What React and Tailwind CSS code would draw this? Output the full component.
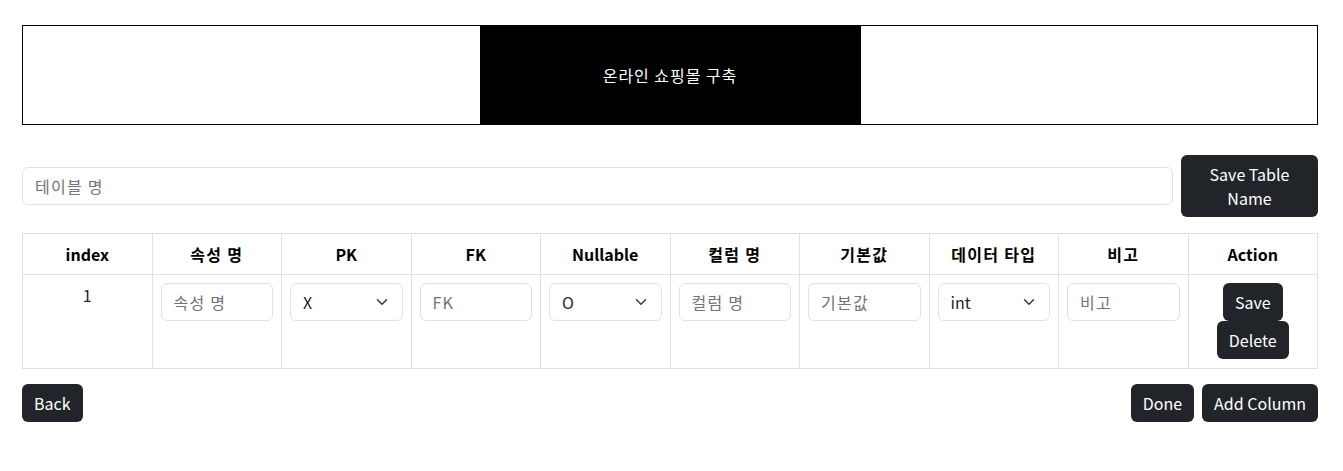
import React from "react";

const font = { fontFamily: '"Segoe UI", "Noto Sans CJK KR", "Noto Sans", sans-serif' };

const Chevron = () => (
  <svg width="16" height="12" viewBox="0 0 16 16" preserveAspectRatio="xMidYMid meet" className="absolute right-[12px] top-1/2 -translate-y-1/2">
    <path d="m2 5 6 6 6-6" fill="none" stroke="#343a40" strokeWidth="2" strokeLinecap="round" strokeLinejoin="round" />
  </svg>
);

const Field = ({ placeholder }) => (
  <input
    placeholder={placeholder}
    className="w-full h-[38px] px-[12px] border border-[#dee2e6] rounded-[6px] text-[16px] text-[#212529] placeholder:text-[#6c757d] placeholder:tracking-[0.08em] bg-white outline-none"
  />
);

const Select = ({ value }) => (
  <div className="relative w-full h-[38px] border border-[#dee2e6] rounded-[6px] bg-white flex items-center px-[12px] text-[16px] text-[#212529]">
    {value}
    <Chevron />
  </div>
);

const Btn = ({ children, className = "" }) => (
  <button className={`bg-[#212529] text-white text-[16px] leading-6 rounded-[6px] px-[12px] py-[7px] ${className}`}>
    {children}
  </button>
);

const headers = [
  { t: "index" },
  { t: "속성 명", ko: true },
  { t: "PK" },
  { t: "FK" },
  { t: "Nullable" },
  { t: "컬럼 명", ko: true },
  { t: "기본값", ko: true },
  { t: "데이터 타입", ko: true },
  { t: "비고", ko: true },
  { t: "Action" },
];

export default function App() {
  return (
    <div className="bg-white min-h-screen pl-[22px] pr-[25px] pt-[25px] text-[#212529] leading-6" style={font}>
      <div className="flex justify-center border border-black h-[100px]">
        <div className="w-[381px] bg-black flex items-center justify-center text-white text-[16px] tracking-[0.06em]">
          온라인 쇼핑몰 구축
        </div>
      </div>

      <div className="flex items-center gap-[8px] mt-[30px]">
        <div className="flex-1">
          <Field placeholder="테이블 명" />
        </div>
        <Btn className="w-[137px] h-[62px] py-[6px]">
          Save Table<br />Name
        </Btn>
      </div>

      <table className="w-full table-fixed border-collapse mt-[16px] text-[16px]">
        <thead>
          <tr>
            {headers.map((h) => (
              <th
                key={h.t}
                className={`border border-[#dee2e6] h-[41px] px-[8px] font-bold text-center text-black ${h.ko ? "tracking-[0.08em]" : ""}`}
              >
                {h.t}
              </th>
            ))}
          </tr>
        </thead>
        <tbody>
          <tr>
            <td className="border border-[#dee2e6] p-[8px] align-top text-center h-[94px]">1</td>
            <td className="border border-[#dee2e6] p-[8px] align-top"><Field placeholder="속성 명" /></td>
            <td className="border border-[#dee2e6] p-[8px] align-top"><Select value="X" /></td>
            <td className="border border-[#dee2e6] p-[8px] align-top"><Field placeholder="FK" /></td>
            <td className="border border-[#dee2e6] p-[8px] align-top"><Select value="O" /></td>
            <td className="border border-[#dee2e6] p-[8px] align-top"><Field placeholder="컬럼 명" /></td>
            <td className="border border-[#dee2e6] p-[8px] align-top"><Field placeholder="기본값" /></td>
            <td className="border border-[#dee2e6] p-[8px] align-top"><Select value="int" /></td>
            <td className="border border-[#dee2e6] p-[8px] align-top"><Field placeholder="비고" /></td>
            <td className="border border-[#dee2e6] p-[8px] align-top">
              <div className="flex flex-col items-center">
                <Btn>Save</Btn>
                <Btn>Delete</Btn>
              </div>
            </td>
          </tr>
        </tbody>
      </table>

      <div className="flex items-center mt-[15px]">
        <Btn>Back</Btn>
        <div className="ml-auto flex gap-[8px]">
          <Btn>Done</Btn>
          <Btn>Add Column</Btn>
        </div>
      </div>
    </div>
  );
}
